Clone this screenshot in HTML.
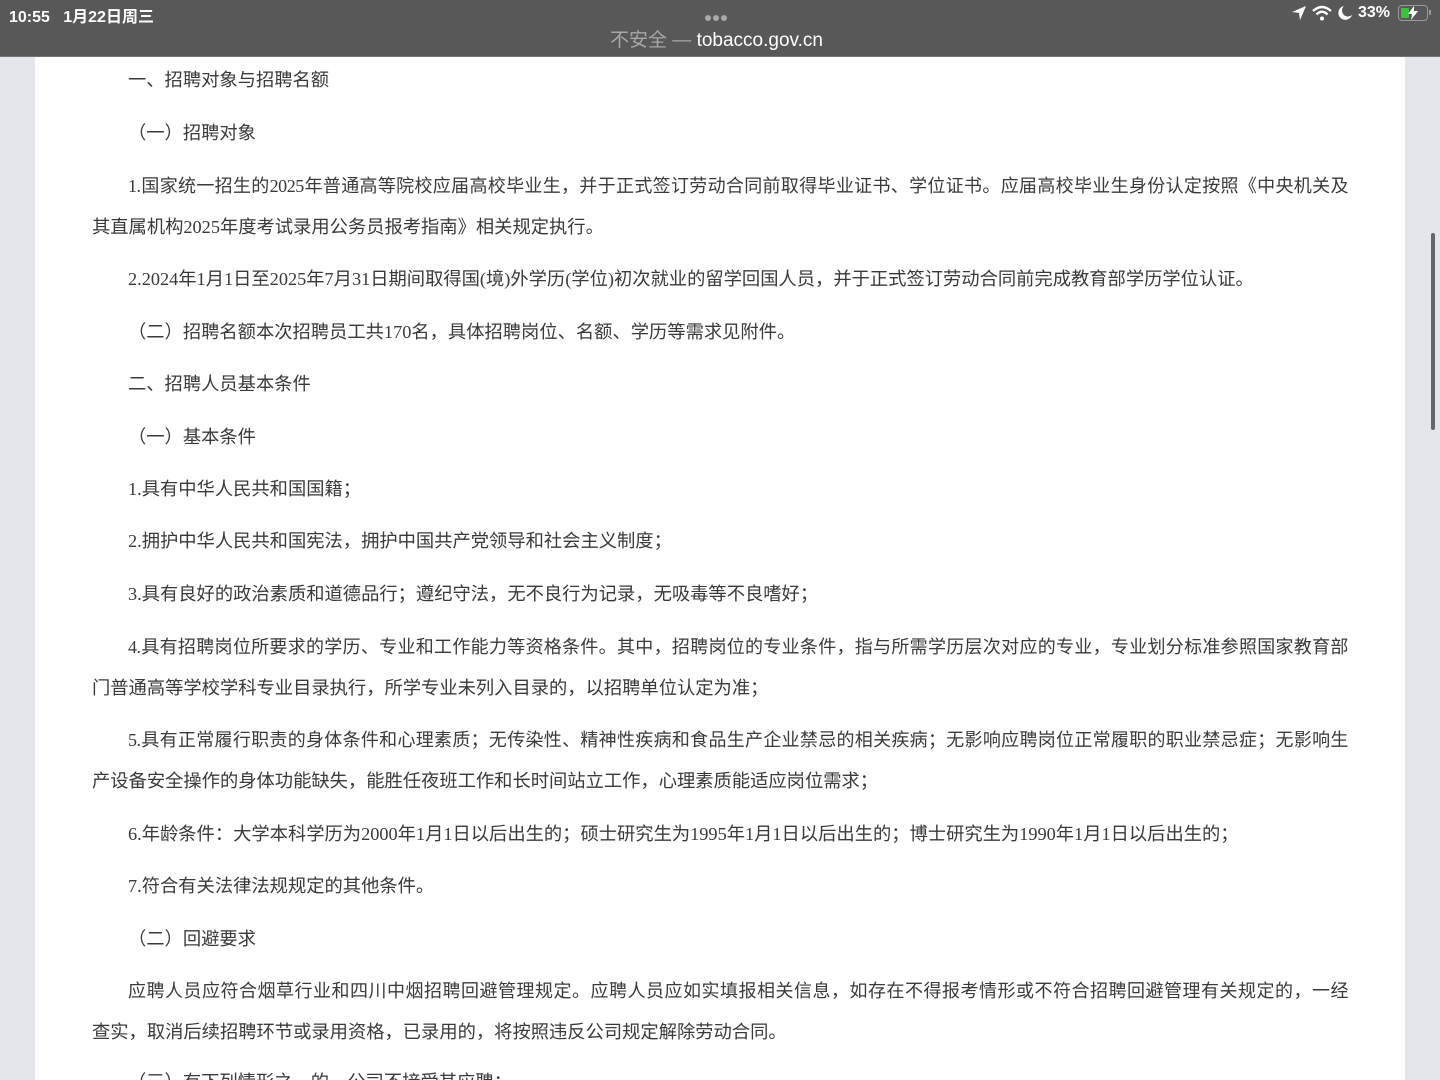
<!DOCTYPE html>
<html><head><meta charset="utf-8"><style>
html,body{margin:0;padding:0;width:1440px;height:1080px;overflow:hidden;}
body{position:relative;background:#e3e6ea;font-family:"Liberation Serif","Noto Sans CJK SC",serif;}
.bar{position:absolute;left:0;top:0;width:1440px;height:56px;background:#585858;border-bottom:1px solid #777;}
.page{position:absolute;left:35px;top:57px;width:1370px;height:1023px;background:#fff;}
.l{position:absolute;height:26px;line-height:26px;font-size:18.3px;color:#3a3a3a;white-space:nowrap;}
.ji{left:128px;width:1220px;text-align:justify;text-align-last:justify;white-space:nowrap;font-size:18px;letter-spacing:-0.45px;}
.sb{font-family:"Liberation Sans","Noto Sans CJK SC",sans-serif;position:absolute;}
</style></head><body>
<div class="bar">
 <div class="sb" style="left:9px;top:3px;color:#fff;font-size:16px;font-weight:bold;">10:55&nbsp;&nbsp;&nbsp;1月22日周三</div>
 <div class="sb" style="left:705px;top:8px;">
  <span style="display:inline-block;width:6px;height:6px;border-radius:3px;background:#aaa;margin-right:2px"></span><span style="display:inline-block;width:6px;height:6px;border-radius:3px;background:#aaa;margin-right:2px"></span><span style="display:inline-block;width:6px;height:6px;border-radius:3px;background:#aaa;"></span>
 </div>
 <div class="sb" style="left:610px;top:25px;font-size:19px;color:#a8a8a8;">不安全 — <span style="color:#fff;">tobacco.gov.cn</span></div>
 <svg class="sb" style="left:1290px;top:5px" width="18" height="16" viewBox="0 0 18 16"><path d="M16 1 L2 7 L9 8 L10 15 Z" fill="#fff"/></svg>
 <svg class="sb" style="left:1311px;top:5px" width="22" height="16" viewBox="0 0 22 16"><path d="M2 6 Q11 -2 20 6" stroke="#fff" stroke-width="2.4" fill="none"/><path d="M5.5 9.5 Q11 4 16.5 9.5" stroke="#fff" stroke-width="2.4" fill="none"/><circle cx="11" cy="13.5" r="2" fill="#fff"/></svg>
 <svg class="sb" style="left:1337px;top:5px" width="16" height="16" viewBox="0 0 16 16"><path d="M7 1 A7 7 0 1 0 15 10 A6 6 0 0 1 7 1Z" fill="#fff"/></svg>
 <div class="sb" style="left:1358px;top:4px;color:#fff;font-size:16px;font-weight:bold;">33%</div>
 <div class="sb" style="left:1398px;top:5px;width:28px;height:14px;border:1.5px solid #999;border-radius:4px;"><div style="position:absolute;left:2px;top:2px;width:8px;height:10px;background:#3cc13b;border-radius:1px"></div><svg style="position:absolute;left:8px;top:0" width="12" height="14" viewBox="0 0 12 14"><path d="M7 0 L1 8 L5 8 L4 14 L11 5 L7 5 Z" fill="#fff"/></svg></div>
 <div class="sb" style="left:1429px;top:10px;width:2px;height:5px;background:#999;"></div>
</div>
<div class="page"></div>
<div style="position:absolute;left:1431px;top:233px;width:4px;height:197px;background:#666;border-radius:2px;"></div>

<div class="l" style="left:128px;top:67px">一、招聘对象与招聘名额</div>
<div class="l" style="left:128px;top:120px">（一）招聘对象</div>
<div class="l ji" style="top:173px">1.国家统一招生的2025年普通高等院校应届高校毕业生，并于正式签订劳动合同前取得毕业证书、学位证书。应届高校毕业生身份认定按照《中央机关及</div>
<div class="l" style="left:92px;top:214px">其直属机构2025年度考试录用公务员报考指南》相关规定执行。</div>
<div class="l" style="left:128px;top:266px">2.2024年1月1日至2025年7月31日期间取得国(境)外学历(学位)初次就业的留学回国人员，并于正式签订劳动合同前完成教育部学历学位认证。</div>
<div class="l" style="left:128px;top:319px">（二）招聘名额本次招聘员工共170名，具体招聘岗位、名额、学历等需求见附件。</div>
<div class="l" style="left:128px;top:371px">二、招聘人员基本条件</div>
<div class="l" style="left:128px;top:424px">（一）基本条件</div>
<div class="l" style="left:128px;top:476px">1.具有中华人民共和国国籍；</div>
<div class="l" style="left:128px;top:528px">2.拥护中华人民共和国宪法，拥护中国共产党领导和社会主义制度；</div>
<div class="l" style="left:128px;top:581px">3.具有良好的政治素质和道德品行；遵纪守法，无不良行为记录，无吸毒等不良嗜好；</div>
<div class="l ji" style="top:634px">4.具有招聘岗位所要求的学历、专业和工作能力等资格条件。其中，招聘岗位的专业条件，指与所需学历层次对应的专业，专业划分标准参照国家教育部</div>
<div class="l" style="left:92px;top:675px">门普通高等学校学科专业目录执行，所学专业未列入目录的，以招聘单位认定为准；</div>
<div class="l ji" style="top:727px">5.具有正常履行职责的身体条件和心理素质；无传染性、精神性疾病和食品生产企业禁忌的相关疾病；无影响应聘岗位正常履职的职业禁忌症；无影响生</div>
<div class="l" style="left:92px;top:768px">产设备安全操作的身体功能缺失，能胜任夜班工作和长时间站立工作，心理素质能适应岗位需求；</div>
<div class="l" style="left:128px;top:821px">6.年龄条件：大学本科学历为2000年1月1日以后出生的；硕士研究生为1995年1月1日以后出生的；博士研究生为1990年1月1日以后出生的；</div>
<div class="l" style="left:128px;top:873px">7.符合有关法律法规规定的其他条件。</div>
<div class="l" style="left:128px;top:926px">（二）回避要求</div>
<div class="l ji" style="top:978px">应聘人员应符合烟草行业和四川中烟招聘回避管理规定。应聘人员应如实填报相关信息，如存在不得报考情形或不符合招聘回避管理有关规定的，一经</div>
<div class="l" style="left:92px;top:1019px">查实，取消后续招聘环节或录用资格，已录用的，将按照违反公司规定解除劳动合同。</div>
<div class="l" style="left:128px;top:1069px">（三）有下列情形之一的，公司不接受其应聘：</div>
</body></html>
